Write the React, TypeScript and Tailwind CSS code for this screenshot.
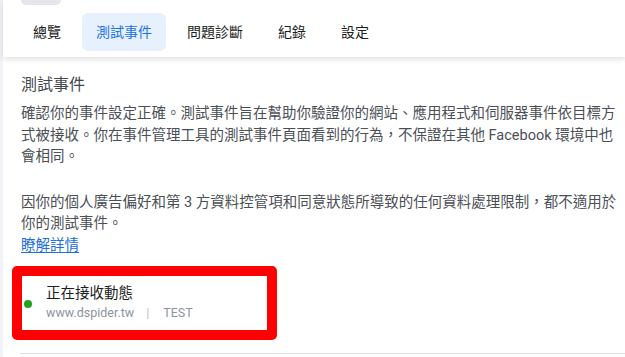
import React from "react";

const font = { fontFamily: 'Roboto, "Noto Sans CJK TC", "Noto Sans CJK JP", sans-serif' };

export default function App() {
  const tabs = ["總覽", "測試事件", "問題診斷", "紀錄", "設定"];
  return (
    <div
      lang="zh-Hant-TW"
      className="w-[625px] h-[357px] overflow-hidden bg-[#f0f2f5] pl-[3px] flex flex-col"
      style={font}
    >
      <div className="relative z-10 bg-white h-[57px] shadow-[0_2px_6px_rgba(0,0,0,0.13)] flex flex-col">
        <div className="ml-[18px] w-[40px] h-[5px] rounded-b-[6px] bg-[#e4e6eb]" />
        <div className="mt-[8px] pl-[16px] flex gap-[7px]">
          {tabs.map((t, i) => (
            <div
              key={t}
              className={
                i === 1
                  ? "h-[38px] px-[14px] rounded-[6px] flex items-center text-[14px] bg-[#e7f0fd] text-[#1b74e4]"
                  : "h-[38px] px-[14px] rounded-[6px] flex items-center text-[14px] text-[#1c1e21]"
              }
            >
              {t}
            </div>
          ))}
        </div>
      </div>
      <div className="flex-1 bg-white pl-[18px] pr-[3px] pt-[18px] flex flex-col">
        <div className="text-[16px] leading-[20px] text-[#444950]">測試事件</div>
        <p className="mt-[8px] text-[14.5px] leading-[21.5px] text-[#4b4f56]">
          確認你的事件設定正確。測試事件旨在幫助你驗證你的網站、應用程式和伺服器事件依目標方式被接收。你在事件管理工具的測試事件頁面看到的行為，不保證在其他 Facebook 環境中也會相同。
        </p>
        <p className="mt-[24px] text-[14.5px] leading-[21.5px] text-[#4b4f56]">
          因你的個人廣告偏好和第 3 方資料控管項和同意狀態所導致的任何資料處理限制，都不適用於你的測試事件。
        </p>
        <a className="self-start text-[14.5px] leading-[21.5px] text-[#216fdb] underline underline-offset-2">
          瞭解詳情
        </a>
        <div className="mt-[10px] -ml-[9px] w-[265px] h-[74px] border-[10px] border-[#ff0000] rounded-[5px] flex items-center pl-[2px]">
          <div className="w-[8px] h-[8px] rounded-full bg-[#1fa51f] mt-[2px]" />
          <div className="ml-[14px] flex flex-col">
            <div className="text-[14.5px] leading-[20px] text-[#1c1e21]">正在接收動態</div>
            <div className="text-[12.5px] leading-[18px] text-[#8d949e] flex">
              <span>www.dspider.tw</span>
              <span className="ml-[12px] mr-[14px] text-[#bcc0c4]">|</span>
              <span>TEST</span>
            </div>
          </div>
        </div>
        <div className="mt-[13px] -ml-[1px] -mr-[3px] h-px bg-[#dadde1]" />
      </div>
    </div>
  );
}
